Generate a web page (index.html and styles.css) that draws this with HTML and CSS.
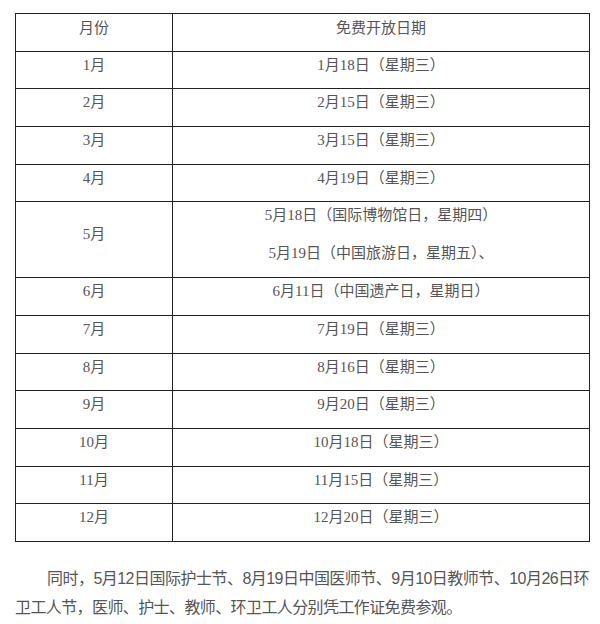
FILE: index.html
```html
<!DOCTYPE html>
<html lang="zh-CN">
<head>
<meta charset="utf-8">
<title>免费开放日期</title>
<link rel="stylesheet" href="styles.css">
</head>
<body>
<div class="page">
  <table class="schedule">
    <colgroup><col class="col-month"><col class="col-date"></colgroup>
    <thead>
      <tr><th><p class="line">月份</p></th><th><p class="line">免费开放日期</p></th></tr>
    </thead>
    <tbody>
      <tr><td><p class="line">1月</p></td><td><p class="line">1月18日（星期三）</p></td></tr>
      <tr><td><p class="line">2月</p></td><td><p class="line">2月15日（星期三）</p></td></tr>
      <tr><td><p class="line">3月</p></td><td><p class="line">3月15日（星期三）</p></td></tr>
      <tr><td><p class="line">4月</p></td><td><p class="line">4月19日（星期三）</p></td></tr>
      <tr><td><p class="line">5月</p></td><td><p class="line">5月18日（国际博物馆日，星期四）</p><p class="line">5月19日（中国旅游日，星期五）、</p></td></tr>
      <tr><td><p class="line">6月</p></td><td><p class="line">6月11日（中国遗产日，星期日）</p></td></tr>
      <tr><td><p class="line">7月</p></td><td><p class="line">7月19日（星期三）</p></td></tr>
      <tr><td><p class="line">8月</p></td><td><p class="line">8月16日（星期三）</p></td></tr>
      <tr><td><p class="line">9月</p></td><td><p class="line">9月20日（星期三）</p></td></tr>
      <tr><td><p class="line">10月</p></td><td><p class="line">10月18日（星期三）</p></td></tr>
      <tr><td><p class="line">11月</p></td><td><p class="line">11月15日（星期三）</p></td></tr>
      <tr><td><p class="line">12月</p></td><td><p class="line">12月20日（星期三）</p></td></tr>
    </tbody>
  </table>
  <p class="note">同时，5月12日国际护士节、8月19日中国医师节、9月10日教师节、10月26日环卫工人节，医师、护士、教师、环卫工人分别凭工作证免费参观。</p>
</div>
</body>
</html>
```
FILE: styles.css
```css
html, body {
  margin: 0;
  padding: 0;
  background: #ffffff;
}

.page {
  padding: 13px 0 0 15px;
  color: #555555;
}

.schedule {
  width: 575px;
  border-collapse: collapse;
  table-layout: fixed;
  font-family: "Liberation Serif", "Noto Sans CJK SC", serif;
  font-size: 15px;
}

.col-month {
  width: 157px;
}

.schedule th,
.schedule td {
  border: 1px solid #222222;
  padding: 0 0 10.7px;
  text-align: center;
  font-weight: normal;
  vertical-align: middle;
}

.line {
  margin: 0;
  line-height: 26px;
}

.line + .line {
  margin-top: 12px;
}

.schedule th .line {
  font-family: "Noto Sans CJK SC", sans-serif;
}

.note {
  margin: 22px 0 0;
  width: 574px;
  font-family: "Liberation Sans", "Noto Sans CJK SC", sans-serif;
  font-size: 16px;
  letter-spacing: -0.6px;
  line-height: 29.5px;
  text-indent: 2em;
  text-align: justify;
}
```
